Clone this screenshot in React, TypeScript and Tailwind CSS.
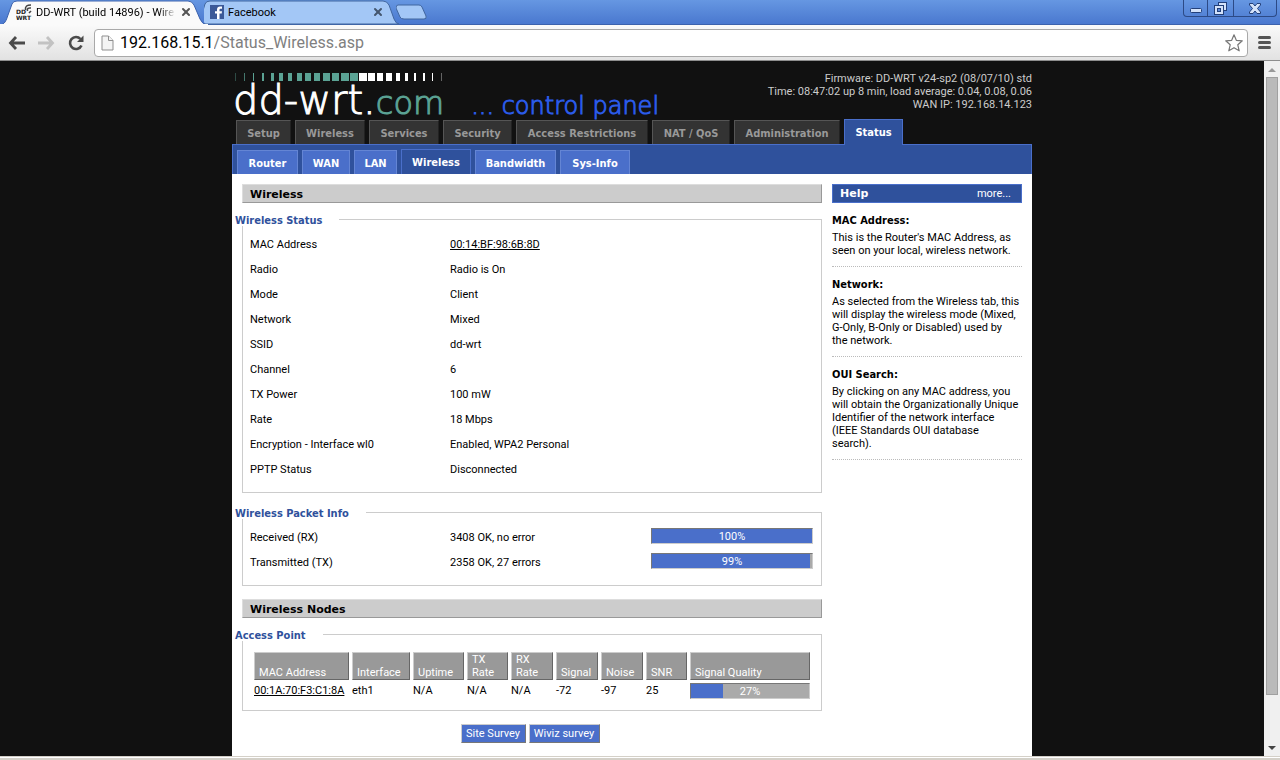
import React from 'react';
import { X } from 'lucide-react';

interface NavTab {
  label: string;
  width: string;
  active?: boolean;
}

interface InfoRow {
  label: string;
  value: string;
  link?: boolean;
}

interface HelpEntry {
  term: string;
  text: string;
}

const mainTabs: NavTab[] = [
  { label: 'Setup', width: 'w-[55px]' },
  { label: 'Wireless', width: 'w-[70px]' },
  { label: 'Services', width: 'w-[70px]' },
  { label: 'Security', width: 'w-[69px]' },
  { label: 'Access Restrictions', width: 'w-[132px]' },
  { label: 'NAT / QoS', width: 'w-[78px]' },
  { label: 'Administration', width: 'w-[106px]' },
  { label: 'Status', width: 'w-[59px]', active: true },
];

const subTabs: NavTab[] = [
  { label: 'Router', width: 'w-[61px]' },
  { label: 'WAN', width: 'w-12' },
  { label: 'LAN', width: 'w-[43px]' },
  { label: 'Wireless', width: 'w-[70px]', active: true },
  { label: 'Bandwidth', width: 'w-[81px]' },
  { label: 'Sys-Info', width: 'w-[70px]' },
];

const statusRows: InfoRow[] = [
  { label: 'MAC Address', value: '00:14:BF:98:6B:8D', link: true },
  { label: 'Radio', value: 'Radio is On' },
  { label: 'Mode', value: 'Client' },
  { label: 'Network', value: 'Mixed' },
  { label: 'SSID', value: 'dd-wrt' },
  { label: 'Channel', value: '6' },
  { label: 'TX Power', value: '100 mW' },
  { label: 'Rate', value: '18 Mbps' },
  { label: 'Encryption - Interface wl0', value: 'Enabled, WPA2 Personal' },
  { label: 'PPTP Status', value: 'Disconnected' },
];

const packetRows = [
  { label: 'Received (RX)', value: '3408 OK, no error', percent: 100 },
  { label: 'Transmitted (TX)', value: '2358 OK, 27 errors', percent: 99 },
];

const nodeColumns = [
  { label: 'MAC Address', width: 'w-[95px]' },
  { label: 'Interface', width: 'w-[58px]' },
  { label: 'Uptime', width: 'w-[51px]' },
  { label: 'TX Rate', width: 'w-[41px]' },
  { label: 'RX Rate', width: 'w-[42px]' },
  { label: 'Signal', width: 'w-[42px]' },
  { label: 'Noise', width: 'w-[42px]' },
  { label: 'SNR', width: 'w-[41px]' },
  { label: 'Signal Quality', width: 'w-[120px]' },
];

const helpEntries: HelpEntry[] = [
  {
    term: 'MAC Address:',
    text: "This is the Router's MAC Address, as\nseen on your local, wireless network.",
  },
  {
    term: 'Network:',
    text: 'As selected from the Wireless tab, this\nwill display the wireless mode (Mixed,\nG-Only, B-Only or Disabled) used by\nthe network.',
  },
  {
    term: 'OUI Search:',
    text: 'By clicking on any MAC address, you\nwill obtain the Organizationally Unique\nIdentifier of the network interface\n(IEEE Standards OUI database\nsearch).',
  },
];

// [x, width] of each stripe above the logo
const tealStripes = [
  [0, 1], [9, 1], [18, 1], [27, 2], [36, 3], [44, 4], [53, 4],
  [62, 5], [70, 6], [79, 6], [88, 7], [97, 7], [106, 8], [115, 8],
];
const whiteStripes = [
  [124, 8], [133, 7], [142, 6], [151, 6], [161, 4], [170, 3], [179, 2], [188, 2], [197, 1], [206, 1],
];

const boldFont = "font-['DejaVu_Sans_Condensed','DejaVu_Sans',sans-serif] font-bold";

const DdWrtIcon: React.FC = () => (
  <svg width="16" height="17" viewBox="0 0 16 17" className="shrink-0" aria-hidden="true">
    <text x="0" y="10" fontSize="6" fontWeight="700" fontFamily="DejaVu Sans" fill="#222">DD</text>
    <text x="0" y="16" fontSize="6" fontWeight="700" fontFamily="DejaVu Sans" fill="#222">WRT</text>
    <g fill="none" stroke="#444" strokeWidth="1.6">
      <path d="M9.500 6C9 2 11 1 15 1" />
      <path d="M11.500 7C11 4 12 3.800 15 4" />
      <path d="M13 9L15 7" />
    </g>
  </svg>
);

const BrowserTabs: React.FC = () => (
  <div className="flex h-[25px] shrink-0 border-b border-[#3c62ad] bg-linear-to-b from-[#6697e2] to-[#4a78cf] text-black">
    <div className="relative z-10 flex w-[204px] shrink-0 items-center pl-4">
      <svg width="208" height="25" viewBox="0 0 208 25" className="absolute left-0 top-0" aria-hidden="true">
        <path
          d="M0 25C5 24 6 21 8 15L12 4Q13 1 17 1H188Q192 1 194 5L200 19Q202 24 207 25Z"
          fill="#fafafa"
          stroke="#3c62ad"
        />
        <path d="M0 25H208" stroke="#fafafa" strokeWidth="2" />
      </svg>
      <div className="relative flex w-full items-center gap-1">
        <DdWrtIcon />
        <span className="w-[140px] whitespace-nowrap pt-0.5 [mask-image:linear-gradient(to_right,black_88%,transparent)]">
          DD-WRT (build 14896) - Wire
        </span>
        <button type="button" aria-label="Close tab">
          <X size={12} strokeWidth={4} color="#555" />
        </button>
      </div>
    </div>
    <div className="relative flex w-48 shrink-0 items-center pl-1.5">
      <svg width="196" height="25" viewBox="0 0 196 25" className="absolute left-0 top-0" aria-hidden="true">
        <path
          d="M0 24L-2 14L1 4Q2 1 6 1H179Q183 1 185 5L190 19Q192 24 195 24Z"
          fill="#a3c7f6"
          stroke="#41669f"
        />
      </svg>
      <div className="relative flex w-full items-center">
        <svg width="14" height="14" viewBox="0 0 14 14" aria-hidden="true">
          <rect width="14" height="14" fill="#3b5998" />
          <path d="M7 14V8.500H5V6.200H7V4.500C7 2.500 8.200 1.500 10 1.500H12V3.800H10.800C9.800 3.800 9.500 4.200 9.500 5V6.200H12L11.700 8.500H9.500V14Z" fill="#fff" />
        </svg>
        <span className="ml-1 w-[144px] pt-0.5">Facebook</span>
        <button type="button" aria-label="Close tab">
          <X size={12} strokeWidth={4} color="#44566f" />
        </button>
      </div>
    </div>
    <button type="button" aria-label="New tab" className="self-center">
      <svg width="31" height="16" viewBox="0 0 31 16" aria-hidden="true">
        <path d="M2 1H23Q25 1 26 3L30 12Q31 15 28 15H8Q5 15 4 13L0 4Q0 1 2 1Z" fill="#a3c7f6" stroke="#41669f" />
      </svg>
    </button>
    <div className="ml-auto mr-[3px] flex h-[17px] divide-x divide-[#2c4a86] rounded-b border border-t-0 border-[#2c4a86]">
      <button type="button" aria-label="Minimize" className="flex w-6 items-center justify-center">
        <svg width="12" height="5" viewBox="0 0 12 5" className="mt-1">
          <rect x=".5" y=".5" width="11" height="4" rx="1" fill="#d3e2fa" stroke="#23407a" />
        </svg>
      </button>
      <button type="button" aria-label="Restore" className="flex w-[26px] items-center justify-center">
        <svg width="13" height="13" viewBox="0 0 13 13" fill="#d3e2fa" stroke="#23407a">
          <rect x="4.500" y=".5" width="8" height="8" />
          <rect x=".5" y="3.500" width="9" height="9" />
          <rect x="3.500" y="6.500" width="3" height="3" fill="#5c8ad9" />
        </svg>
      </button>
      <button type="button" aria-label="Close window" className="flex w-[42px] items-center justify-center">
        <svg width="12" height="11" viewBox="0 0 12 11">
          <path d="M.5 .5H4L6 3L8 .5H11.500V2L8.500 5.500L11.500 9V10.500H8L6 8L4 10.500H.5V9L3.500 5.500L.5 2Z" fill="#d3e2fa" stroke="#23407a" />
        </svg>
      </button>
    </div>
  </div>
);

const AddressBar: React.FC = () => (
  <div className="flex h-9 shrink-0 items-center border-b border-[#8e8e8e] bg-linear-to-b from-[#fafafa] to-[#e2e2e2] pl-2 pr-2">
    <button type="button" aria-label="Back" className="w-7">
      <svg width="18" height="14" viewBox="0 0 18 14" fill="none" stroke="#4a4a4a" strokeWidth="2.800">
        <path d="M8 1L2.500 7L8 13M2.500 7H17" />
      </svg>
    </button>
    <button type="button" aria-label="Forward" className="w-7 pl-0.5">
      <svg width="18" height="14" viewBox="0 0 18 14" fill="none" stroke="#c2c2c2" strokeWidth="2.800">
        <path d="M9 1L14.500 7L9 13M14.500 7H0" />
      </svg>
    </button>
    <button type="button" aria-label="Reload" className="w-[30px] pl-1">
      <svg width="16" height="16" viewBox="0 0 16 16">
        <path d="M13.500 10.500A6 6 0 1 1 12.500 4" fill="none" stroke="#4a4a4a" strokeWidth="2.600" />
        <path d="M15.500 .5V7H9Z" fill="#4a4a4a" />
      </svg>
    </button>
    <div className="flex h-7 flex-1 items-center rounded-sm border border-[#a9a9a9] bg-white pl-1.5 pr-1">
      <svg width="13" height="16" viewBox="0 0 13 16" fill="#f4f4f4" stroke="#8f8f8f" aria-hidden="true">
        <path d="M1 1H7.500L12 5.500V15H1Z" />
        <path d="M7.500 1V5.500H12" />
      </svg>
      <label htmlFor="url" className="ml-1.5 text-base">192.168.15.1</label>
      <input
        id="url"
        type="text"
        defaultValue="/Status_Wireless.asp"
        className="min-w-0 flex-1 bg-transparent text-base text-[#808080] outline-none"
      />
      <button type="button" aria-label="Bookmark this page">
        <svg width="18" height="18" viewBox="0 0 18 18" fill="#fff" stroke="#777" strokeWidth="1.200" strokeLinejoin="round">
          <path d="M9 .8L11.300 6.300L17.300 6.800L12.800 10.800L14.200 16.800L9 13.700L3.800 16.800L5.200 10.800L.7 6.800L6.700 6.300Z" />
        </svg>
      </button>
    </div>
    <button type="button" aria-label="Menu" className="ml-2.5 flex w-[14px] flex-col gap-0.5">
      <span className="h-[3px] w-[13px] rounded-sm bg-[#555]" />
      <span className="h-[3px] w-[13px] rounded-sm bg-[#555]" />
      <span className="h-[3px] w-[13px] rounded-sm bg-[#555]" />
    </button>
  </div>
);

const Logo: React.FC = () => (
  <div className="pl-[3px] pt-3">
    <svg width="208" height="8" viewBox="0 0 208 8" className="block" aria-hidden="true">
      {tealStripes.map(([x, w], i) => (
        <rect key={x} x={x} width={w} height="8" fill="#5ba394" opacity={i === 0 ? 0.4 : i === 1 ? 0.7 : 1} />
      ))}
      {whiteStripes.map(([x, w]) => (
        <rect key={x} x={x} width={w} height="8" fill="#fff" opacity={x === 206 ? 0.35 : 1} />
      ))}
    </svg>
    <div className="-ml-0.5 flex h-[38px] items-baseline whitespace-nowrap font-['DejaVu_Sans_Light','DejaVu_Sans',sans-serif] font-extralight leading-[38px]">
      <span className="text-[40px] text-white [-webkit-text-stroke:1px]">dd-wrt.</span>
      <span className="text-[32px] text-[#5ba394] [-webkit-text-stroke:1px]">com</span>
      <span className="ml-[27px] text-[24px] text-[#2b5be8] [-webkit-text-stroke:1px]">... control panel</span>
    </div>
  </div>
);

const Meter: React.FC<{ percent: number; label: string }> = ({ percent, label }) => (
  <div
    role="meter"
    aria-label={label}
    aria-valuenow={percent}
    className="relative h-4 w-full border border-b-[#ccc] border-l-[#777] border-r-[#ccc] border-t-[#777] bg-[#aaa]"
  >
    <div className="h-full bg-[#4a6fca]" style={{ width: `${percent}%` }} />
    <span className="absolute inset-0 text-center leading-4 text-white">{percent}%</span>
  </div>
);

const SectionTitle: React.FC<{ children: React.ReactNode }> = ({ children }) => (
  <h2 className="h-[19px] border border-b-[#999] border-l-[#ddd] border-r-[#999] border-t-[#ddd] bg-[#ccc] pl-[7px] font-['DejaVu_Sans',sans-serif] text-[11px] font-bold leading-[19px]">
    {children}
  </h2>
);

const Group: React.FC<{ title: string; padding: string; children: React.ReactNode }> = ({
  title,
  padding,
  children,
}) => (
  <fieldset className={`min-w-0 border border-[#ccc] pl-[7px] pr-2 ${padding}`}>
    <legend className={`-ml-[15px] h-[13px] bg-white pr-[17px] leading-[15px] text-[#2f519c] ${boldFont}`}>
      {title}
    </legend>
    {children}
  </fieldset>
);

const Header: React.FC = () => (
  <header className="bg-[#111]">
    <div className="flex h-[58px] justify-between">
      <Logo />
      <div className="pt-[11px] text-right leading-[13px] text-[#ccc]">
        <p>Firmware: DD-WRT v24-sp2 (08/07/10) std</p>
        <p>Time: 08:47:02 up 8 min, load average: 0.04, 0.08, 0.06</p>
        <p>WAN IP: 192.168.14.123</p>
      </div>
    </div>
    <nav className={`flex items-end gap-1 pl-1 ${boldFont}`}>
      {mainTabs.map((tab) => (
        <a
          key={tab.label}
          href="#"
          className={
            tab.active
              ? `-mb-px h-[26px] border border-b-0 border-[#4a6fca] bg-[#2f519c] text-center leading-[25px] text-white ${tab.width}`
              : `h-6 border border-b-0 border-l-[#555] border-r-[#222] border-t-[#555] bg-[#333] text-center leading-[25px] text-[#999] ${tab.width}`
          }
        >
          {tab.label}
        </a>
      ))}
    </nav>
    <nav className={`flex h-[30px] items-end gap-1 border border-b-0 border-[#4a6fca] bg-[#2f519c] pl-1 ${boldFont}`}>
      {subTabs.map((tab) => (
        <a
          key={tab.label}
          href="#"
          className={
            tab.active
              ? `h-[25px] border border-b-0 border-[#4a6fca] bg-[#2f519c] text-center leading-[25px] text-white ${tab.width}`
              : `h-6 border border-b-0 border-[#6485d4] bg-[#4a6fca] text-center leading-[25px] text-white ${tab.width}`
          }
        >
          {tab.label}
        </a>
      ))}
    </nav>
  </header>
);

const NodesTable: React.FC = () => (
  <table className="ml-px table-fixed border-separate border-spacing-[3px] leading-[13px]">
    <thead>
      <tr>
        {nodeColumns.map((col) => (
          <th
            key={col.label}
            scope="col"
            className={`h-7 border border-b-[#666] border-l-[#ccc] border-r-[#666] border-t-[#ccc] bg-[#999] pl-1 text-left align-bottom font-normal text-white ${col.width}`}
          >
            {col.label}
          </th>
        ))}
      </tr>
    </thead>
    <tbody>
      <tr className="whitespace-nowrap leading-4">
        <td>
          <a href="#" className="underline">00:1A:70:F3:C1:8A</a>
        </td>
        <td>eth1</td>
        <td>N/A</td>
        <td>N/A</td>
        <td>N/A</td>
        <td>-72</td>
        <td>-97</td>
        <td>25</td>
        <td>
          <Meter percent={27} label="Signal Quality" />
        </td>
      </tr>
    </tbody>
  </table>
);

const HelpPanel: React.FC = () => (
  <aside className="w-[190px] shrink-0">
    <div className="flex h-[19px] justify-between border border-[#4a6fca] bg-[#2f519c] pl-[7px] pr-2.5 leading-[18px] text-white">
      <h2 className="font-['DejaVu_Sans',sans-serif] font-bold">Help</h2>
      <a href="#">more...</a>
    </div>
    <dl className="leading-[13px]">
      {helpEntries.map((entry) => (
        <div key={entry.term} className="border-b border-dotted border-[#bbb] pb-[9px] pt-[11px]">
          <dt className={boldFont}>{entry.term}</dt>
          <dd className="whitespace-pre-line pt-1">{entry.text}</dd>
        </div>
      ))}
    </dl>
  </aside>
);

const Scrollbar: React.FC = () => (
  <div className="flex w-4 shrink-0 flex-col items-center bg-[#f0f0f0]" aria-hidden="true">
    <svg width="8" height="16" viewBox="0 0 8 16">
      <path d="M4 7L8 11H0Z" fill="#999" />
    </svg>
    <div className="w-3 flex-1 border border-[#a0a0a0] bg-[#bababa]" />
    <div className="h-11" />
    <svg width="8" height="17" viewBox="0 0 8 17">
      <path d="M4 11L0 7H8Z" fill="#444" />
    </svg>
  </div>
);

export default function App() {
  return (
    <div className="flex h-screen flex-col overflow-hidden font-['Roboto','Open_Sans',sans-serif] text-[11px] text-black">
      <BrowserTabs />
      <AddressBar />

      <div className="flex min-h-0 flex-1">
        <div className="min-w-0 flex-1 overflow-hidden bg-[#111]">
          <div className="mx-auto min-h-full max-w-[800px] bg-white">
            <Header />
            <div className="flex gap-2.5 p-2.5">
              <main className="min-w-0 flex-1">
                <SectionTitle>Wireless</SectionTitle>
                <div className="mb-[13px] mt-2.5 flex flex-col gap-[13px]">
                  <Group title="Wireless Status" padding="pt-[7px] pb-[9px]">
                    <dl>
                      {statusRows.map((row) => (
                        <div key={row.label} className="flex h-[25px] items-center">
                          <dt className="w-[200px]">{row.label}</dt>
                          <dd>
                            {row.link ? <a href="#" className="underline">{row.value}</a> : row.value}
                          </dd>
                        </div>
                      ))}
                    </dl>
                  </Group>
                  <Group title="Wireless Packet Info" padding="pt-[7px] pb-[9px]">
                    <dl>
                      {packetRows.map((row) => (
                        <div key={row.label} className="flex h-[25px] items-center">
                          <dt className="w-[200px]">{row.label}</dt>
                          <dd className="flex flex-1 items-center justify-between">
                            {row.value}
                            <div className="w-[162px] pb-[5px]">
                              <Meter percent={row.percent} label={row.label} />
                            </div>
                          </dd>
                        </div>
                      ))}
                    </dl>
                  </Group>
                </div>

                <SectionTitle>Wireless Nodes</SectionTitle>
                <div className="mt-2.5">
                  <Group title="Access Point" padding="py-2">
                    <NodesTable />
                  </Group>
                </div>

                <div className="mt-[13px] flex justify-center gap-[3px] pr-1 text-white">
                  <button type="button" className="h-[19px] w-[65px] border border-b-[#777] border-l-[#ccc] border-r-[#777] border-t-[#ccc] bg-[#4a6fca] leading-[17px]">
                    Site Survey
                  </button>
                  <button type="button" className="h-[19px] w-[71px] border border-b-[#777] border-l-[#ccc] border-r-[#777] border-t-[#ccc] bg-[#4a6fca] leading-[17px]">
                    Wiviz survey
                  </button>
                </div>
              </main>
              <HelpPanel />
            </div>
          </div>
        </div>
        <Scrollbar />
      </div>

      <div className="h-1 shrink-0 border-t border-[#d4d0c8] bg-[#d4d0c8]">
        <div className="h-px bg-white" />
      </div>
    </div>
  );
}
